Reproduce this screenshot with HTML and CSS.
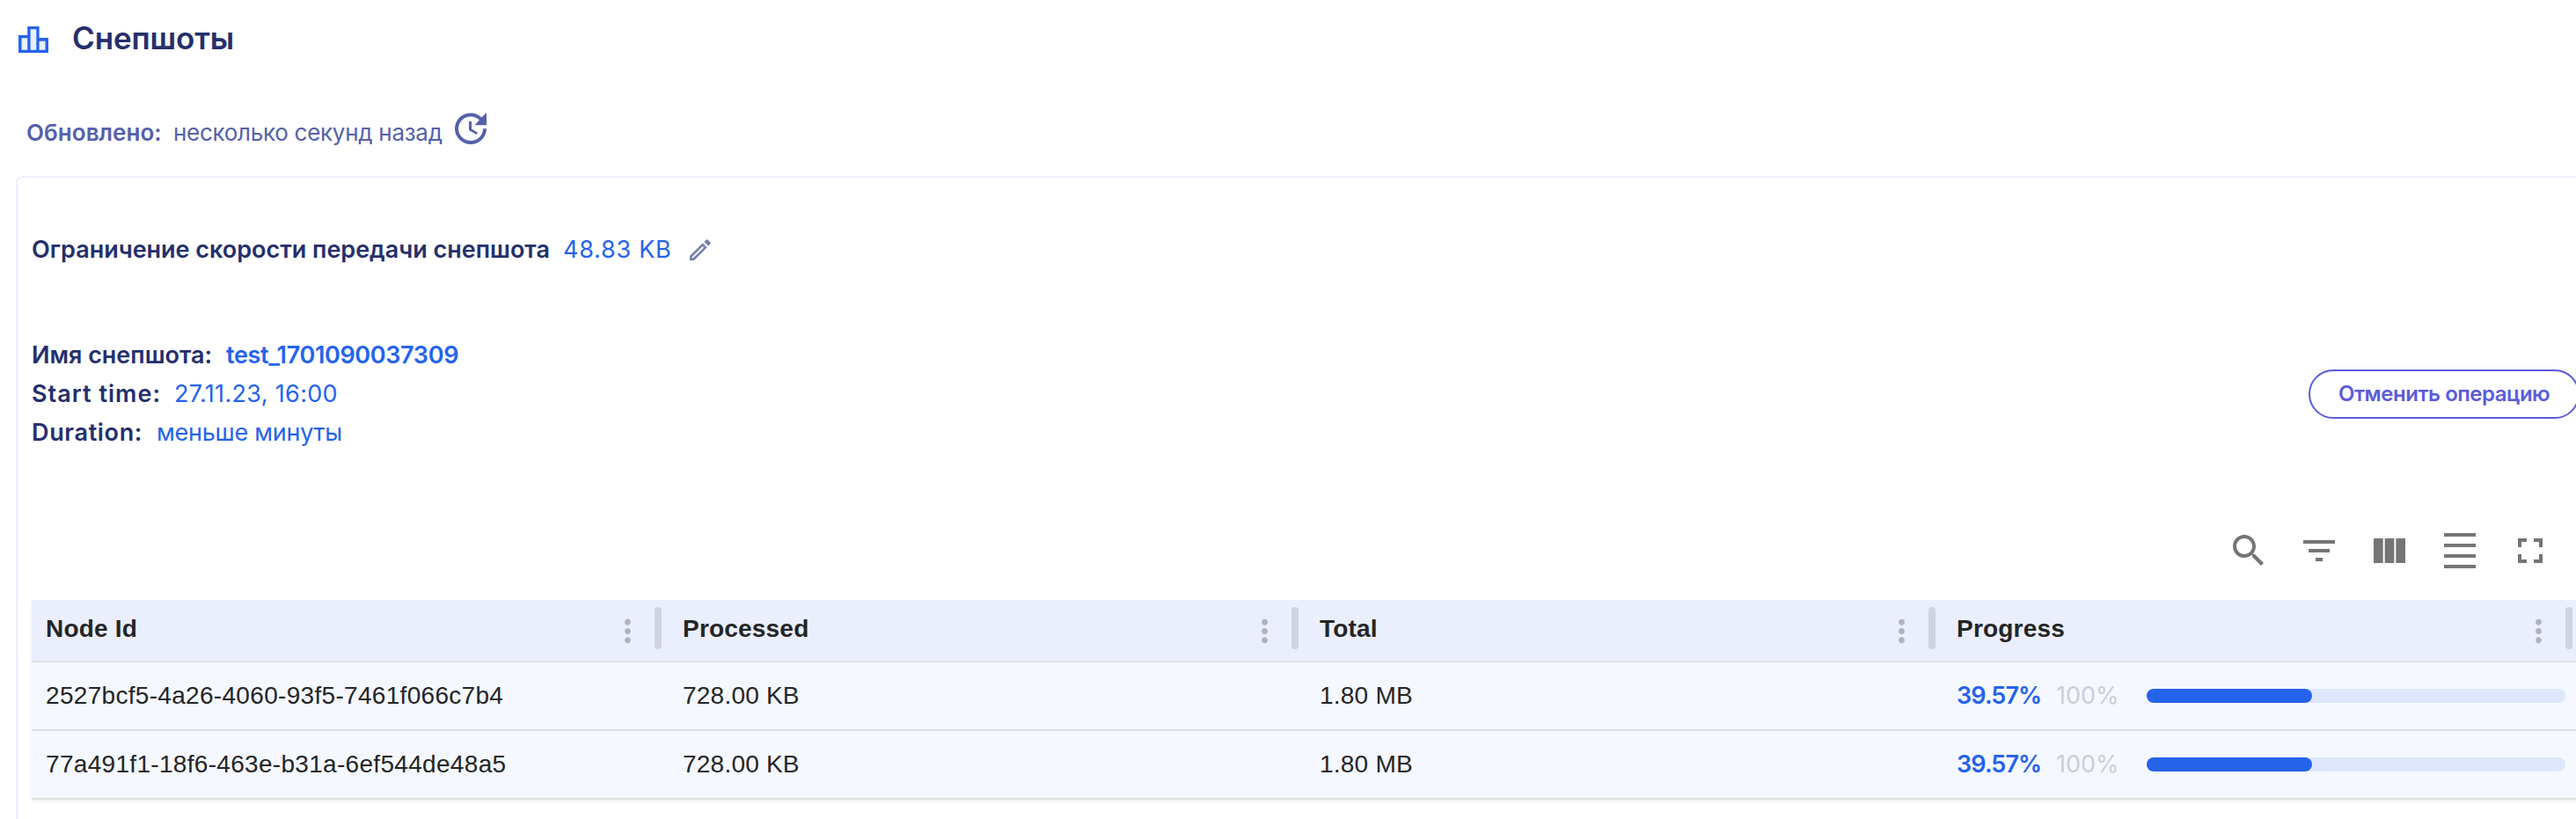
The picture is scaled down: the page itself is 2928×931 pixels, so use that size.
FILE: index.html
```html
<!DOCTYPE html>
<html lang="ru">
<head>
<meta charset="utf-8">
<title>Снепшоты</title>
<link rel="stylesheet" href="styles.css">
</head>
<body>
<svg class="sprite" aria-hidden="true">
  <symbol id="more" viewBox="0 0 24 24"><path d="M12 8c1.100 0 2-.9 2-2s-.9-2-2-2-2 .9-2 2 .9 2 2 2zm0 2c-1.100 0-2 .9-2 2s.9 2 2 2 2-.9 2-2-.9-2-2-2zm0 6c-1.100 0-2 .9-2 2s.9 2 2 2 2-.9 2-2-.9-2-2-2z"/></symbol>
</svg>
<main class="page">
  <header class="title-bar">
    <svg class="title-icon" viewBox="0 0 34 30">
      <path fill="#2563eb" d="M0 10h10.200V0h13.400v13H34v17H0z"/>
      <path fill="#e9effd" d="M3.500 13.300h6.700v13.400H3.500zM13.600 3.300h6.700v23.400h-6.700zM23.600 16.700h6.900v10h-6.900z"/>
    </svg>
    <h1 class="title">Снепшоты</h1>
  </header>

  <div class="updated">
    <span class="updated-label">Обновлено:</span>
    <span class="updated-value">несколько секунд назад</span>
    <svg class="updated-icon" viewBox="0 0 24 24"><path d="M21 10.120h-6.780l2.740-2.820c-2.730-2.700-7.150-2.800-9.880-.1-2.730 2.710-2.730 7.080 0 9.790s7.150 2.710 9.880 0C18.320 15.650 19 14.080 19 12.100h2c0 1.980-.88 4.550-2.640 6.290-3.510 3.480-9.210 3.480-12.720 0-3.500-3.470-3.530-9.110-.02-12.580s9.140-3.470 12.650 0L21 3v7.120zM12.500 8v4.250l3.500 2.080-.72 1.210L11 13V8h1.500z"/></svg>
  </div>

  <section class="card">
    <div class="limit">
      <span class="label limit-label">Ограничение скорости передачи снепшота</span>
      <span class="value limit-value">48.83 KB</span>
      <svg class="edit-icon" viewBox="0 0 24 24"><path fill-rule="evenodd" d="M0 24v-5L14.700 4.300l5 5L5 24zM2.700 21.300h1.200L16 9.400l-1.400-1.400L2.700 20.100zM16.400 2.900 18.700.6q.9-.8 1.800 0l2.900 2.900q.8.9 0 1.800l-2.300 2.300z"/></svg>
    </div>

    <div class="snapshot">
      <div class="facts">
        <div class="fact"><span class="label name-label">Имя снепшота:</span><span class="value name-value">test_1701090037309</span></div>
        <div class="fact"><span class="label start-label">Start time:</span><span class="value start-value">27.11.23, 16:00</span></div>
        <div class="fact"><span class="label dur-label">Duration:</span><span class="value dur-value">меньше минуты</span></div>
      </div>
      <button class="cancel" type="button">Отменить операцию</button>
    </div>

    <div class="toolbar">
      <svg viewBox="0 0 24 24"><path d="M15.500 14h-.79l-.28-.27C15.410 12.590 16 11.110 16 9.500 16 5.910 13.090 3 9.500 3S3 5.910 3 9.500 5.910 16 9.500 16c1.610 0 3.090-.59 4.230-1.570l.27.28v.79l5 4.990L20.490 19l-4.990-5zm-6 0C7.010 14 5 11.990 5 9.500S7.010 5 9.500 5 14 7.010 14 9.500 11.990 14 9.500 14z"/></svg>
      <svg viewBox="0 0 24 24"><path d="M10 18h4v-2h-4v2zM3 6v2h18V6H3zm3 7h12v-2H6v2z"/></svg>
      <svg viewBox="0 0 24 24"><path d="M14.670 5v14H9.330V5h5.340zm1 14H21V5h-5.330v14zm-7.340 0V5H3v14h5.330z"/></svg>
      <svg viewBox="0 0 24 24"><path d="M3 2h18v2H3zM3 8h18v2H3zM3 14h18v2H3zM3 20h18v2H3z"/></svg>
      <svg viewBox="0 0 24 24"><path d="M7 14H5v5h5v-2H7v-3zm-2-4h2V7h3V5H5v5zm12 7h-3v2h5v-5h-2v3zM14 5v2h3v3h2V5h-5z"/></svg>
    </div>

    <div class="table">
      <div class="row head">
        <div class="th"><span class="th-text">Node Id</span><svg class="more"><use href="#more"/></svg><i class="sep"></i></div>
        <div class="th"><span class="th-text">Processed</span><svg class="more"><use href="#more"/></svg><i class="sep"></i></div>
        <div class="th"><span class="th-text">Total</span><svg class="more"><use href="#more"/></svg><i class="sep"></i></div>
        <div class="th"><span class="th-text">Progress</span><svg class="more"><use href="#more"/></svg><i class="sep"></i></div>
      </div>
      <div class="row">
        <div class="td id">2527bcf5-4a26-4060-93f5-7461f066c7b4</div>
        <div class="td">728.00 KB</div>
        <div class="td">1.80 MB</div>
        <div class="td progress"><span class="pct">39.57%</span><span class="full">100%</span><div class="track"><div class="fill" style="width:39.57%"></div></div></div>
      </div>
      <div class="row">
        <div class="td id">77a491f1-18f6-463e-b31a-6ef544de48a5</div>
        <div class="td">728.00 KB</div>
        <div class="td">1.80 MB</div>
        <div class="td progress"><span class="pct">39.57%</span><span class="full">100%</span><div class="track"><div class="fill" style="width:39.57%"></div></div></div>
      </div>
    </div>
  </section>
</main>
</body>
</html>
```
FILE: styles.css
```css
* { box-sizing: border-box; }
html, body { margin: 0; height: 931px; overflow: hidden; background: #fff; }
.sprite { display: none; }
.page {
  width: 2950px; height: 931px; padding-left: 18px;
  display: flex; flex-direction: column;
  font-family: Inter, "Liberation Sans", sans-serif; white-space: nowrap;
}
.title-bar { display: flex; align-items: flex-start; height: 122px; padding: 21px 0 0 3px; }
.title-icon { width: 34px; height: 30px; margin-top: 9px; }
.title { margin: 0 0 0 27px; font-size: 35px; line-height: 44px; font-weight: 600; color: #252f6c; letter-spacing: -.15px; }

.updated { display: flex; align-items: flex-start; height: 78px; padding-left: 12px; font-size: 26px; line-height: 58px; color: #5560ab; }
.updated-label { width: 167px; font-weight: 600; letter-spacing: .05px; }
.updated-value { width: 314px; letter-spacing: -.28px; }
.updated-icon { width: 48px; height: 48px; fill: #5560ab; }

.card {
  width: 2932px; flex: 1; padding: 60px 16px 0;
  border: 2px solid #ebeffd; border-bottom: 0; border-radius: 8px 8px 0 0;
  font-size: 27px; line-height: 44px;
}
.label { font-weight: 600; color: #252f6c; }
.value { color: #2563eb; }
.limit { display: flex; align-items: flex-start; height: 120px; width: 2896px; }
.limit-label { width: 604px; letter-spacing: -.02px; }
.limit-value { width: 144px; letter-spacing: .75px; }
.edit-icon { width: 24px; height: 24px; margin-top: 10px; fill: #7781ad; }

.snapshot { display: flex; align-items: center; justify-content: space-between; height: 132px; width: 2896px; }
.fact { display: flex; height: 44px; }
.name-label { width: 221px; letter-spacing: -.02px; }
.name-value { font-weight: 600; letter-spacing: -.35px; }
.start-label { width: 162px; letter-spacing: 1.03px; }
.start-value { letter-spacing: .33px; }
.dur-label { width: 142px; letter-spacing: .66px; }
.dur-value { letter-spacing: -.27px; }
.cancel {
  width: 308px; height: 56px; padding: 0 32px;
  border: 2px solid #5b5bdc; border-radius: 28px; background: #fff; color: #5b5bdc;
  font: 600 24px/52px Inter, "Liberation Sans", sans-serif; letter-spacing: -.47px; text-align: left;
}

.toolbar { display: flex; justify-content: flex-end; gap: 32px; width: 2896px; height: 168px; padding: 88px 32px 0 0; }
.toolbar svg { width: 48px; height: 48px; fill: #757575; }

.table { width: 2896px; font-family: "Liberation Sans", Arial, sans-serif; font-size: 28px; color: #242527; box-shadow: 0 2px 4px rgba(0, 0, 0, .07); }
.row { display: grid; grid-template-columns: repeat(4, 724px); height: 78px; border-bottom: 2px solid #e0e0e0; background: #f5f8fe; }
.head { height: 71px; background: #ebeffd; font-weight: 700; }
.th { display: flex; align-items: center; height: 64px; padding: 0 8px 0 16px; }
.th-text { flex: 1; line-height: 48px; padding-top: 1px; letter-spacing: .2px; }
.more { width: 41px; height: 41px; margin: 6px 10.500px 0 0; fill: #afb3bb; }
.sep { width: 8px; height: 48px; border-radius: 4px; background: #d0d4e0; }
.td { display: flex; align-items: center; padding-left: 16px; line-height: 76px; letter-spacing: .22px; }
.id { letter-spacing: .31px; }
.progress { padding-right: 16px; font-family: Inter, "Liberation Sans", sans-serif; font-size: 27px; }
.pct { width: 113px; color: #2563eb; font-weight: 600; letter-spacing: -.9px; }
.full { width: 103px; color: #cbcddc; letter-spacing: 0; }
.track { flex: 1; height: 16px; border-radius: 8px; background: #dee7fc; }
.fill { height: 16px; border-radius: 8px; background: #2563eb; }
```
